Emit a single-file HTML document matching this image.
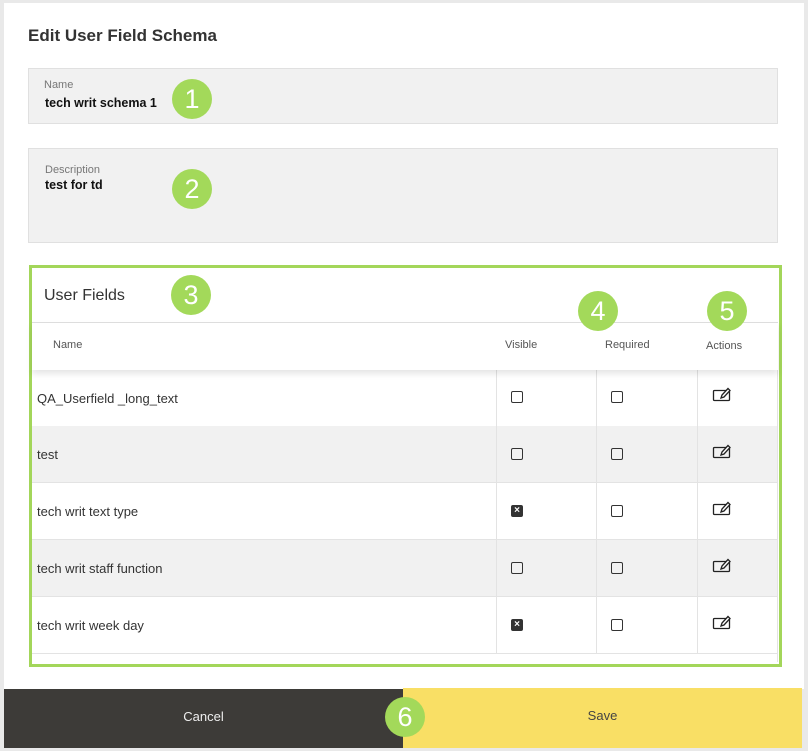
<!DOCTYPE html>
<html><head><style>
*{margin:0;padding:0;box-sizing:border-box}
body{width:808px;height:751px;background:#e9e9e9;font-family:"Liberation Sans",sans-serif;position:relative;overflow:hidden}
.panel{position:absolute;left:4px;top:3px;width:800px;height:686px;background:#fff}
.abs{position:absolute}
h1{position:absolute;left:28px;top:26px;font-size:17px;font-weight:bold;color:#333}
.field{position:absolute;left:28px;width:750px;background:#f1f1f1;border:1px solid #e0e0e0}
.lbl{position:absolute;font-size:11px;color:#777}
.val{position:absolute;font-size:12.5px;color:#111;font-weight:bold}
.c{position:absolute;width:40px;height:40px;border-radius:50%;background:#a3d95a;color:#fff;font-size:27px;text-align:center;line-height:40px}
.green{position:absolute;left:29px;top:265px;width:753px;height:402px;border:3px solid #a3d65a;background:#fff}
.row{position:absolute;left:32px;width:746px;height:57px;border-bottom:1px solid #e3e3e3;font-size:13px;color:#333}
.row span{position:absolute;left:5px;top:21px}
.vl{position:absolute;top:370px;height:284px;width:1px;background:#e3e3e3}
.cb{position:absolute;width:12px;height:12px;border:1.3px solid #333;border-radius:2px}
.cbx{background:#333;color:#fff;font-size:10px;line-height:10px;text-align:center;font-weight:bold}
.hd{position:absolute;font-size:11px;color:#555}
</style></head><body>
<svg width="0" height="0" style="position:absolute"><defs><g id="ed" fill="none" stroke="#222" stroke-width="1.3"><rect x="1.5" y="4.5" width="16" height="10" rx="1"/><path d="M9 12l1-3 6-6.5 2 2-6 6.5z" fill="#fff"/></g></defs></svg>
<div class="panel"></div>
<h1>Edit User Field Schema</h1>
<div class="field" style="top:68px;height:56px"><div class="lbl" style="left:15px;top:10px">Name</div><div class="val" style="left:16px;top:27px">tech writ schema 1</div></div>
<div class="field" style="top:148px;height:95px"><div class="lbl" style="left:16px;top:15px">Description</div><div class="val" style="left:16px;top:29px">test for td</div></div>
<div class="green"></div>
<div class="abs" style="left:44px;top:287px;font-size:16px;color:#333">User Fields</div>
<div class="abs" style="left:32px;top:322px;width:746px;height:48px;background:#fff;border-top:1px solid #ddd;box-shadow:0 4px 6px rgba(0,0,0,0.1);z-index:2"></div>
<div class="hd" style="left:53px;top:339px;z-index:3">Name</div>
<div class="hd" style="left:505px;top:339px;z-index:3">Visible</div>
<div class="hd" style="left:605px;top:339px;z-index:3">Required</div>
<div class="hd" style="left:706px;top:340px;z-index:3">Actions</div>
<div class="row" style="top:370px;background:#fff"><span>QA_Userfield _long_text</span></div>
<div class="row" style="top:426px;background:#f1f1f1"><span>test</span></div>
<div class="row" style="top:483px;background:#fff"><span>tech writ text type</span></div>
<div class="row" style="top:540px;background:#f1f1f1"><span>tech writ staff function</span></div>
<div class="row" style="top:597px;background:#fff"><span>tech writ week day</span></div>
<div class="vl" style="left:496px"></div><div class="vl" style="left:596px"></div><div class="vl" style="left:697px"></div><div class="vl" style="left:777px;top:322px;height:340px"></div>
<div class="cb" style="left:511px;top:391px"></div><div class="cb" style="left:611px;top:391px"></div>
<div class="cb" style="left:511px;top:448px"></div><div class="cb" style="left:611px;top:448px"></div>
<div class="cb cbx" style="left:511px;top:505px">×</div><div class="cb" style="left:611px;top:505px"></div>
<div class="cb" style="left:511px;top:562px"></div><div class="cb" style="left:611px;top:562px"></div>
<div class="cb cbx" style="left:511px;top:619px">×</div><div class="cb" style="left:611px;top:619px"></div>
<svg class="abs" style="left:712px;top:386px" width="20" height="16" viewBox="0 0 20 16"><use href="#ed"/></svg>
<svg class="abs" style="left:712px;top:443px" width="20" height="16" viewBox="0 0 20 16"><use href="#ed"/></svg>
<svg class="abs" style="left:712px;top:500px" width="20" height="16" viewBox="0 0 20 16"><use href="#ed"/></svg>
<svg class="abs" style="left:712px;top:557px" width="20" height="16" viewBox="0 0 20 16"><use href="#ed"/></svg>
<svg class="abs" style="left:712px;top:614px" width="20" height="16" viewBox="0 0 20 16"><use href="#ed"/></svg>
<div class="abs" style="left:4px;top:689px;width:399px;height:59px;background:#3d3b38;color:#eee;font-size:13px;text-align:center;line-height:56px">Cancel</div>
<div class="abs" style="left:403px;top:688px;width:399px;height:60px;background:#f9df65;color:#444;font-size:13px;text-align:center;line-height:56px">Save</div>
<div class="c" style="left:172px;top:79px">1</div>
<div class="c" style="left:172px;top:169px">2</div>
<div class="c" style="left:171px;top:275px;z-index:5">3</div>
<div class="c" style="left:578px;top:291px;z-index:5">4</div>
<div class="c" style="left:707px;top:291px;z-index:5">5</div>
<div class="c" style="left:385px;top:697px;z-index:5">6</div>
</body></html>
